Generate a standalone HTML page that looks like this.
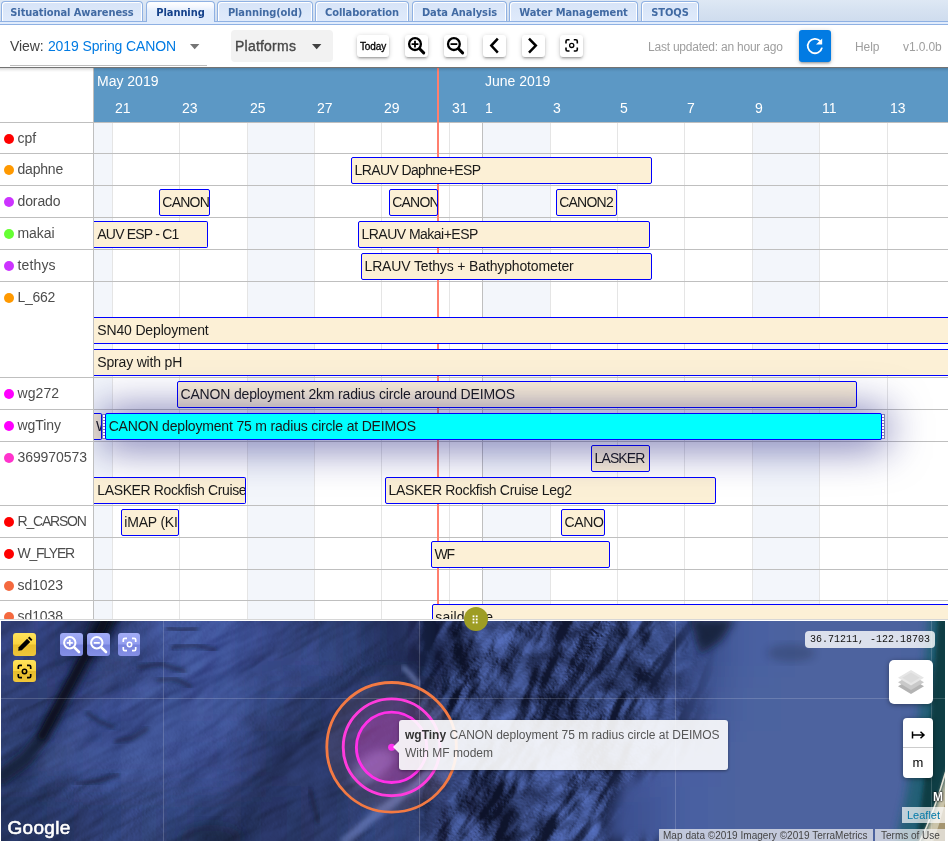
<!DOCTYPE html>
<html lang="en">
<head>
<meta charset="utf-8">
<title>ODSS - Planning</title>
<style>
*{box-sizing:border-box}
html,body{margin:0;padding:0}
body{width:948px;height:841px;overflow:hidden;position:relative;background:#fff;
 font-family:"Liberation Sans",sans-serif;font-size:14px;color:#1a1a1a}
.abs{position:absolute}
/* ---------- ExtJS style tab bar ---------- */
#tabbar{position:absolute;left:0;top:0;width:948px;height:25px;
 background:linear-gradient(#dee8f4 0,#d6e2f1 10px,#cfdcee 21px);}
#tabbar .strip{position:absolute;left:0;top:21px;width:948px;height:4px;background:#e1ecfc;
 border-top:1px solid #8fb1e3;border-bottom:1px solid #8fb1e3}
.tab{position:absolute;top:1px;height:20px;border:1px solid #8fb1e3;border-bottom:none;
 border-radius:4px 4px 0 0;background:linear-gradient(#d7e4f8 0,#dbe7f9 9px,#dfeafb 19px);
 box-shadow:inset 1px 1px 0 #fff,inset -1px 0 0 #fff;
 font:bold 11px "DejaVu Sans Condensed","DejaVu Sans","Liberation Sans",sans-serif;color:#416aa3;
 line-height:20px;padding-top:1px;letter-spacing:-0.08px;text-align:center;white-space:nowrap;overflow:hidden}
.tab.active{height:21px;background:linear-gradient(#ffffff 0,#f3f7fe 5px,#e3eefd 9px,#dfebfc 21px);color:#15428b;z-index:2;box-shadow:none}
/* ---------- toolbar ---------- */
#toolbar{position:absolute;left:0;top:25px;width:948px;height:42px;background:#fff}
#tbshadow{position:absolute;left:0;top:67px;width:948px;height:5px;z-index:20;
 background:linear-gradient(rgba(0,0,0,.55) 0,rgba(0,0,0,.55) 1px,rgba(0,0,0,.16) 1px,rgba(0,0,0,.06) 3px,rgba(0,0,0,0) 5px)}
.tbtxt{position:absolute;white-space:nowrap;line-height:16px}
.btn{position:absolute;top:35px;height:22px;background:#fff;border-radius:3px;
 box-shadow:0 1px 5px rgba(0,0,0,.2),0 2px 2px rgba(0,0,0,.14),0 3px 1px -2px rgba(0,0,0,.12)}
.btn svg{position:absolute;left:0;top:0}
/* ---------- timeline ---------- */
#tl{position:absolute;left:0;top:68px;width:948px;height:551px;overflow:hidden;background:#fff}
#tlhead{position:absolute;left:94px;top:0;width:854px;height:54px;background:#5c98c5;color:#fff}
#tlhead div{position:absolute;white-space:nowrap;line-height:16px;font-size:14px}
#center{position:absolute;left:94px;top:54px;width:854px;height:498px;overflow:hidden}
.vline{position:absolute;top:0;width:1px;height:498px;background:#e5e5e5}
.vline.major{background:#bfbfbf}
.wk{position:absolute;top:0;height:498px;background:#f3f6fb}
.hline{position:absolute;left:0;width:948px;height:1px;background:#bfbfbf}
.lbl{position:absolute;left:0;width:93px;white-space:nowrap;color:#4d4d4d;font-size:14px;line-height:16px}
.dot{position:absolute;left:4px;width:10px;height:10px;border-radius:50%}
.item{position:absolute;height:27px;border:1px solid #0000ff;border-radius:2px;background:#fcf0d6;
 overflow:hidden;white-space:nowrap;font-size:14px;line-height:17px;padding:4px 0 0 3px;color:#1a1a1a}
.item.cut{border-left:none;border-radius:0 2px 2px 0;padding-left:3px}
.item.sel{background:#00ffff;z-index:5;overflow:visible;box-shadow:0 2px 42px 5px rgba(16,16,120,.6)}
.hd{position:absolute;top:0;width:3px;height:25px;background:repeating-linear-gradient(to bottom,#7d7db3 0,#7d7db3 1px,#fff 1px,#fff 3px)}
#now{position:absolute;left:437px;top:0;width:2px;height:552px;background:#ff7f6e;z-index:2}
</style>
</head>
<body>

<div id="tabbar"><div class="strip"></div>
<div class="tab" style="left:1px;width:142px">Situational Awareness</div>
<div class="tab active" style="left:146px;width:69px">Planning</div>
<div class="tab" style="left:217px;width:96px">Planning(old)</div>
<div class="tab" style="left:315px;width:94px">Collaboration</div>
<div class="tab" style="left:412px;width:95px">Data Analysis</div>
<div class="tab" style="left:509px;width:129px">Water Management</div>
<div class="tab" style="left:641px;width:58px">STOQS</div>
</div>
<div id="toolbar"></div>
<div class="tbtxt" style="left:10px;top:38px;font-size:14px;color:#424242;letter-spacing:-0.1px">View: <span style="color:#027be3;margin-left:0.6px">2019 Spring CANON</span></div>
<div class="abs" style="left:10px;top:65px;width:197px;height:1px;background:#bdbdbd"></div>
<svg class="abs" style="left:188px;top:43px" width="12" height="7" viewBox="0 0 12 7"><path d="M2 1h9.4l-4.7 5.2z" fill="#757575"/></svg>
<div class="abs" style="left:231px;top:30px;width:102px;height:32px;background:#f2f2f2;border-radius:4px"></div>
<div class="tbtxt" style="left:235px;top:38px;font-size:14px;color:#484848;-webkit-text-stroke:0.35px #484848;letter-spacing:0.22px">Platforms</div>
<svg class="abs" style="left:310px;top:43px" width="12" height="7" viewBox="0 0 12 7"><path d="M2 1h9.4l-4.7 5.2z" fill="#424242"/></svg>
<div class="btn" style="left:357px;width:32px"><div style="position:absolute;left:0;top:0;width:32px;line-height:22px;padding-top:1px;text-align:center;font-size:10px;color:#000;-webkit-text-stroke:0.3px #000;letter-spacing:-0.1px">Today</div></div>
<div class="btn" style="left:405px;width:23px"><svg width="23" height="22" viewBox="0 0 23 22"><circle cx="10" cy="9.1" r="5.9" fill="none" stroke="#000" stroke-width="2.3"/><path d="M14.6 13.8l4.1 4.1" stroke="#000" stroke-width="3" stroke-linecap="round"/><path d="M6.6 9.1h6.8M10 5.7v6.8" stroke="#000" stroke-width="1.8"/></svg></div>
<div class="btn" style="left:444px;width:23px"><svg width="23" height="22" viewBox="0 0 23 22"><circle cx="9.9" cy="9.1" r="5.9" fill="none" stroke="#000" stroke-width="2.3"/><path d="M14.5 13.8l4.1 4.1" stroke="#000" stroke-width="3" stroke-linecap="round"/><path d="M6.5 9.1h6.8" stroke="#000" stroke-width="1.8"/></svg></div>
<div class="btn" style="left:483px;width:23px"><svg width="23" height="22" viewBox="0 0 23 22"><path d="M14.800 3.600L8.300 10.600L14.800 17.600" fill="none" stroke="#000" stroke-width="2.500"/></svg></div>
<div class="btn" style="left:522px;width:23px"><svg width="23" height="22" viewBox="0 0 23 22"><path d="M7 3.600L13.800 10.600L7 17.600" fill="none" stroke="#000" stroke-width="2.500"/></svg></div>
<div class="btn" style="left:560px;width:23px"><svg width="23" height="22" viewBox="0 0 23 22"><path d="M6 8.4V6.3a1.5 1.5 0 0 1 1.5-1.5h2M13.8 4.8h2a1.5 1.5 0 0 1 1.5 1.5v2.1M17.3 12.4v2.1a1.5 1.5 0 0 1-1.5 1.5h-2M9.5 16h-2A1.5 1.5 0 0 1 6 14.500v-2.1" fill="none" stroke="#000" stroke-width="1.600"/><circle cx="11.700" cy="10.400" r="2.100" fill="none" stroke="#000" stroke-width="1.300"/></svg></div>
<div class="tbtxt" style="left:648px;top:39px;font-size:12px;color:#9e9e9e;letter-spacing:-0.22px">Last updated: an hour ago</div>
<div class="abs" style="left:799px;top:30px;width:32px;height:32px;background:#027be3;border-radius:3px;box-shadow:0 1px 5px rgba(0,0,0,.2),0 2px 2px rgba(0,0,0,.14),0 3px 1px -2px rgba(0,0,0,.12)"><svg width="32" height="32" viewBox="0 0 32 32"><path d="M21.3 11.2A7.2 7.2 0 1 0 23 17.6" fill="none" stroke="#fff" stroke-width="1.8"/><path d="M23.2 8.4v6.2H17z" fill="#fff"/></svg></div>
<div class="tbtxt" style="left:855px;top:39px;font-size:12px;color:#9e9e9e;letter-spacing:-0.1px">Help</div>
<div class="tbtxt" style="left:903px;top:39px;font-size:12px;color:#9e9e9e;letter-spacing:-0.1px">v1.0.0b</div>
<div id="tl">
<div class="abs" style="left:93px;top:0;width:1px;height:552px;background:#bfbfbf"></div>
<div id="tlhead">
<div style="left:3px;top:5px">May 2019</div>
<div style="left:391.0px;top:5px">June 2019</div>
<div style="left:21.0px;top:32px">21</div>
<div style="left:88.0px;top:32px">23</div>
<div style="left:156.0px;top:32px">25</div>
<div style="left:223.0px;top:32px">27</div>
<div style="left:290.0px;top:32px">29</div>
<div style="left:358.0px;top:32px">31</div>
<div style="left:391.0px;top:32px">1</div>
<div style="left:459.0px;top:32px">3</div>
<div style="left:526.0px;top:32px">5</div>
<div style="left:593.0px;top:32px">7</div>
<div style="left:661.0px;top:32px">9</div>
<div style="left:728.0px;top:32px">11</div>
<div style="left:796.0px;top:32px">13</div>
</div>
<div id="center">
<div class="wk" style="left:0px;width:18px"></div>
<div class="wk" style="left:153px;width:67px"></div>
<div class="wk" style="left:388px;width:68px"></div>
<div class="wk" style="left:658px;width:67px"></div>
<div class="vline" style="left:18px"></div>
<div class="vline" style="left:85px"></div>
<div class="vline" style="left:153px"></div>
<div class="vline" style="left:220px"></div>
<div class="vline" style="left:287px"></div>
<div class="vline" style="left:355px"></div>
<div class="vline major" style="left:388px"></div>
<div class="vline" style="left:456px"></div>
<div class="vline" style="left:523px"></div>
<div class="vline" style="left:590px"></div>
<div class="vline" style="left:658px"></div>
<div class="vline" style="left:725px"></div>
<div class="vline" style="left:793px"></div>
</div>
<div class="hline" style="top:54px"></div>
<div class="hline" style="top:85px"></div>
<div class="hline" style="top:117px"></div>
<div class="hline" style="top:149px"></div>
<div class="hline" style="top:181px"></div>
<div class="hline" style="top:213px"></div>
<div class="hline" style="top:309px"></div>
<div class="hline" style="top:341px"></div>
<div class="hline" style="top:373px"></div>
<div class="hline" style="top:437px"></div>
<div class="hline" style="top:469px"></div>
<div class="hline" style="top:501px"></div>
<div class="hline" style="top:532px"></div>
<div class="dot" style="top:66px;background:#ff0000"></div>
<div class="lbl" style="left:17.5px;top:62px;letter-spacing:-0.08px">cpf</div>
<div class="dot" style="top:97px;background:#ff9900"></div>
<div class="lbl" style="left:17.5px;top:93px;letter-spacing:-0.2px">daphne</div>
<div class="dot" style="top:129px;background:#cc33ff"></div>
<div class="lbl" style="left:17.5px;top:125px;letter-spacing:-0.1px">dorado</div>
<div class="dot" style="top:161px;background:#66ff33"></div>
<div class="lbl" style="left:17.5px;top:157px;letter-spacing:-0.08px">makai</div>
<div class="dot" style="top:193px;background:#cc33ff"></div>
<div class="lbl" style="left:17.5px;top:189px;letter-spacing:0.15px">tethys</div>
<div class="dot" style="top:225px;background:#ff9900"></div>
<div class="lbl" style="left:17.5px;top:221px;letter-spacing:-0.3px">L_662</div>
<div class="dot" style="top:321px;background:#ff00ff"></div>
<div class="lbl" style="left:17.5px;top:317px;letter-spacing:0.1px">wg272</div>
<div class="dot" style="top:353px;background:#ff00ff"></div>
<div class="lbl" style="left:17.5px;top:349px;letter-spacing:-0.08px">wgTiny</div>
<div class="dot" style="top:385px;background:#ff33cc"></div>
<div class="lbl" style="left:17.5px;top:381px;letter-spacing:-0.08px">369970573</div>
<div class="dot" style="top:449px;background:#ff0000"></div>
<div class="lbl" style="left:17.5px;top:445px;letter-spacing:-1.2px">R_CARSON</div>
<div class="dot" style="top:481px;background:#ff0000"></div>
<div class="lbl" style="left:17.5px;top:477px;letter-spacing:-1.25px">W_FLYER</div>
<div class="dot" style="top:513px;background:#f4693f"></div>
<div class="lbl" style="left:17.5px;top:509px;letter-spacing:-0.08px">sd1023</div>
<div class="dot" style="top:544px;background:#f4693f"></div>
<div class="lbl" style="left:17.5px;top:540px;letter-spacing:-0.08px">sd1038</div>
<div class="abs" style="left:94px;top:0;width:854px;height:552px;overflow:hidden;z-index:3">
<div class="item " style="left:257px;top:89px;width:301px;padding-left:2.60px;letter-spacing:-0.627px">LRAUV Daphne+ESP</div>
<div class="item " style="left:65px;top:121px;width:51px;padding-left:2.30px;letter-spacing:-0.77px">CANON</div>
<div class="item " style="left:295px;top:121px;width:49px;padding-left:2.20px;letter-spacing:-0.77px">CANON</div>
<div class="item " style="left:462px;top:121px;width:61px;padding-left:2.20px;letter-spacing:-0.768px">CANON2</div>
<div class="item cut" style="left:0px;top:153px;width:114px;padding-left:3.30px;letter-spacing:-0.797px">AUV ESP - C1</div>
<div class="item " style="left:264px;top:153px;width:292px;padding-left:2.50px;letter-spacing:-0.522px">LRAUV Makai+ESP</div>
<div class="item " style="left:267px;top:185px;width:291px;padding-left:2.50px;letter-spacing:-0.143px">LRAUV Tethys + Bathyphotometer</div>
<div class="item cut" style="left:0px;top:249px;width:866px;padding-left:3.30px;letter-spacing:-0.158px">SN40 Deployment</div>
<div class="item cut" style="left:0px;top:281px;width:866px;padding-left:3.30px;letter-spacing:-0.178px">Spray with pH</div>
<div class="item " style="left:83px;top:313px;width:680px;padding-left:2.50px;letter-spacing:-0.167px">CANON deployment 2km radius circle around DEIMOS</div>
<div class="item cut" style="left:0px;top:345px;width:8px;padding-left:2.00px;letter-spacing:0px">W</div>
<div class="item " style="left:497px;top:377px;width:59px;padding-left:2.60px;letter-spacing:-0.91px">LASKER</div>
<div class="item cut" style="left:0px;top:409px;width:152px;padding-left:3.30px;letter-spacing:-0.373px">LASKER Rockfish Cruise Leg1</div>
<div class="item " style="left:291px;top:409px;width:331px;padding-left:2.50px;letter-spacing:-0.335px">LASKER Rockfish Cruise Leg2</div>
<div class="item " style="left:27px;top:441px;width:58px;padding-left:2.30px;letter-spacing:-0.2px">iMAP (KISS)</div>
<div class="item " style="left:467px;top:441px;width:44px;padding-left:2.60px;letter-spacing:-0.35px">CANON</div>
<div class="item " style="left:337px;top:473px;width:179px;padding-left:2.50px;letter-spacing:-1.3px">WF</div>
<div class="item " style="left:338px;top:536px;width:528px;padding-left:2.30px;letter-spacing:0.111px">saildrone</div>
<div class="item sel" style="left:11px;top:345px;width:777px;padding-left:2.70px;letter-spacing:-0.177px">CANON deployment 75 m radius circle at DEIMOS<i class="hd" style="left:-4px;border-left:1px solid #7d7db3"></i><i class="hd" style="right:-4px;border-right:1px solid #7d7db3"></i></div>
</div>
<div id="now"></div>
</div>
<div id="tbshadow"></div>
<div id="map" class="abs" style="left:1px;top:621px;width:944px;height:220px;background:#3a4e8d;overflow:hidden;font-family:'Liberation Sans',sans-serif">
<svg width="944" height="221" viewBox="0 0 944 221" style="position:absolute;left:0;top:0;display:block">
<defs>
<filter id="rug" x="0" y="0" width="100%" height="100%" color-interpolation-filters="sRGB">
 <feTurbulence type="fractalNoise" baseFrequency="0.0065 0.017" numOctaves="4" seed="23" result="n"/>
 <feColorMatrix in="n" type="matrix" values="0 0 0 0 0  0 0 0 0 0  0 0 0 0 0  1.6 0 0 0 -0.3" result="h"/>
 <feDiffuseLighting in="h" surfaceScale="24" diffuseConstant="1" lighting-color="#6480d6" result="lit">
  <feDistantLight azimuth="200" elevation="32"/>
 </feDiffuseLighting>
 <feComponentTransfer><feFuncR type="linear" slope="0.92" intercept="0.035"/><feFuncG type="linear" slope="0.92" intercept="0.05"/><feFuncB type="linear" slope="0.88" intercept="0.12"/></feComponentTransfer>
</filter>
<filter id="soft" x="0" y="0" width="100%" height="100%" color-interpolation-filters="sRGB">
 <feTurbulence type="fractalNoise" baseFrequency="0.006 0.02" numOctaves="4" seed="5" result="n"/>
 <feColorMatrix in="n" type="matrix" values="0 0 0 0 0  0 0 0 0 0  0 0 0 0 0  1.5 0 0 0 -0.25" result="h"/>
 <feDiffuseLighting in="h" surfaceScale="5" diffuseConstant="1" lighting-color="#ffffff" result="lit">
  <feDistantLight azimuth="200" elevation="30"/>
 </feDiffuseLighting>
</filter>
<filter id="b2" x="-20%" y="-20%" width="140%" height="140%"><feGaussianBlur stdDeviation="2"/></filter>
<filter id="b4" x="-20%" y="-20%" width="140%" height="140%"><feGaussianBlur stdDeviation="4"/></filter>
<filter id="b8" x="-30%" y="-30%" width="160%" height="160%"><feGaussianBlur stdDeviation="8"/></filter>
<filter id="bg" x="0" y="0" width="100%" height="100%" filterUnits="userSpaceOnUse"><feGaussianBlur stdDeviation="20 16"/></filter>
<linearGradient id="mrug" x1="0" y1="0" x2="1" y2="0">
 <stop offset="0" stop-color="#fff" stop-opacity="0"/><stop offset="0.42" stop-color="#fff" stop-opacity="0"/>
 <stop offset="0.48" stop-color="#fff" stop-opacity="1"/><stop offset="0.68" stop-color="#fff" stop-opacity="1"/>
 <stop offset="0.76" stop-color="#fff" stop-opacity="0"/><stop offset="1" stop-color="#fff" stop-opacity="0"/>
</linearGradient>
<mask id="mk1" maskUnits="userSpaceOnUse" x="0" y="0" width="944" height="221">
 <rect width="944" height="221" fill="url(#mrug)"/>
 <path d="M600 221L620 160L700 130L760 130L760 221Z" fill="#000" filter="url(#b8)"/>
</mask>
<linearGradient id="msoft" x1="0" y1="0" x2="1" y2="0">
 <stop offset="0" stop-color="#fff" stop-opacity="1"/><stop offset="0.38" stop-color="#fff" stop-opacity="1"/>
 <stop offset="0.46" stop-color="#fff" stop-opacity="0"/><stop offset="1" stop-color="#fff" stop-opacity="0"/>
</linearGradient>
<mask id="mk2" maskUnits="userSpaceOnUse" x="0" y="0" width="944" height="221"><rect width="944" height="221" fill="url(#msoft)"/></mask>
</defs>
<g filter="url(#bg)">
<rect x="-200.0" y="-200.0" width="260.6" height="255.8" fill="#30417a"/>
<rect x="60.0" y="-200.0" width="60.6" height="255.8" fill="#232e5a"/>
<rect x="120.0" y="-200.0" width="60.6" height="255.8" fill="#3a4d8e"/>
<rect x="180.0" y="-200.0" width="60.6" height="255.8" fill="#4358a0"/>
<rect x="240.0" y="-200.0" width="60.6" height="255.8" fill="#374a8a"/>
<rect x="300.0" y="-200.0" width="60.6" height="255.8" fill="#2f3f75"/>
<rect x="360.0" y="-200.0" width="60.6" height="255.8" fill="#232e5a"/>
<rect x="420.0" y="-200.0" width="60.6" height="255.8" fill="#1e2850"/>
<rect x="480.0" y="-200.0" width="60.6" height="255.8" fill="#2a3868"/>
<rect x="540.0" y="-200.0" width="60.6" height="255.8" fill="#34457f"/>
<rect x="600.0" y="-200.0" width="60.6" height="255.8" fill="#33447c"/>
<rect x="660.0" y="-200.0" width="60.6" height="255.8" fill="#364885"/>
<rect x="720.0" y="-200.0" width="60.6" height="255.8" fill="#4a60a2"/>
<rect x="780.0" y="-200.0" width="60.6" height="255.8" fill="#4e649f"/>
<rect x="840.0" y="-200.0" width="60.6" height="255.8" fill="#4e649f"/>
<rect x="900.0" y="-200.0" width="260.6" height="255.8" fill="#4c639e"/>
<rect x="-200.0" y="55.2" width="260.6" height="55.9" fill="#2d3c70"/>
<rect x="60.0" y="55.2" width="60.6" height="55.9" fill="#35478a"/>
<rect x="120.0" y="55.2" width="60.6" height="55.9" fill="#3d5192"/>
<rect x="180.0" y="55.2" width="60.6" height="55.9" fill="#3f5499"/>
<rect x="240.0" y="55.2" width="60.6" height="55.9" fill="#2f3f74"/>
<rect x="300.0" y="55.2" width="60.6" height="55.9" fill="#2a386a"/>
<rect x="360.0" y="55.2" width="60.6" height="55.9" fill="#2c3a6c"/>
<rect x="420.0" y="55.2" width="60.6" height="55.9" fill="#1d2750"/>
<rect x="480.0" y="55.2" width="60.6" height="55.9" fill="#2a3766"/>
<rect x="540.0" y="55.2" width="60.6" height="55.9" fill="#27335f"/>
<rect x="600.0" y="55.2" width="60.6" height="55.9" fill="#2c3a6c"/>
<rect x="660.0" y="55.2" width="60.6" height="55.9" fill="#3d5192"/>
<rect x="720.0" y="55.2" width="60.6" height="55.9" fill="#4c63a0"/>
<rect x="780.0" y="55.2" width="60.6" height="55.9" fill="#4e649f"/>
<rect x="840.0" y="55.2" width="60.6" height="55.9" fill="#4e649f"/>
<rect x="900.0" y="55.2" width="260.6" height="55.9" fill="#4c639e"/>
<rect x="-200.0" y="110.5" width="260.6" height="55.9" fill="#2f3f74"/>
<rect x="60.0" y="110.5" width="60.6" height="55.9" fill="#3b4f90"/>
<rect x="120.0" y="110.5" width="60.6" height="55.9" fill="#3d5193"/>
<rect x="180.0" y="110.5" width="60.6" height="55.9" fill="#3a4e90"/>
<rect x="240.0" y="110.5" width="60.6" height="55.9" fill="#2a386b"/>
<rect x="300.0" y="110.5" width="60.6" height="55.9" fill="#2a3869"/>
<rect x="360.0" y="110.5" width="60.6" height="55.9" fill="#2c3a6c"/>
<rect x="420.0" y="110.5" width="60.6" height="55.9" fill="#1b2448"/>
<rect x="480.0" y="110.5" width="60.6" height="55.9" fill="#1f2a52"/>
<rect x="540.0" y="110.5" width="60.6" height="55.9" fill="#3a4d8c"/>
<rect x="600.0" y="110.5" width="60.6" height="55.9" fill="#44589c"/>
<rect x="660.0" y="110.5" width="60.6" height="55.9" fill="#4a5fa2"/>
<rect x="720.0" y="110.5" width="60.6" height="55.9" fill="#4e649f"/>
<rect x="780.0" y="110.5" width="60.6" height="55.9" fill="#4e649f"/>
<rect x="840.0" y="110.5" width="60.6" height="55.9" fill="#4e649f"/>
<rect x="900.0" y="110.5" width="260.6" height="55.9" fill="#4c639e"/>
<rect x="-200.0" y="165.8" width="260.6" height="255.8" fill="#273462"/>
<rect x="60.0" y="165.8" width="60.6" height="255.8" fill="#2d3d72"/>
<rect x="120.0" y="165.8" width="60.6" height="255.8" fill="#32447c"/>
<rect x="180.0" y="165.8" width="60.6" height="255.8" fill="#2c3a6c"/>
<rect x="240.0" y="165.8" width="60.6" height="255.8" fill="#27335f"/>
<rect x="300.0" y="165.8" width="60.6" height="255.8" fill="#2b3868"/>
<rect x="360.0" y="165.8" width="60.6" height="255.8" fill="#33447c"/>
<rect x="420.0" y="165.8" width="60.6" height="255.8" fill="#1a2345"/>
<rect x="480.0" y="165.8" width="60.6" height="255.8" fill="#27335f"/>
<rect x="540.0" y="165.8" width="60.6" height="255.8" fill="#33447c"/>
<rect x="600.0" y="165.8" width="60.6" height="255.8" fill="#3d5192"/>
<rect x="660.0" y="165.8" width="60.6" height="255.8" fill="#4a60a2"/>
<rect x="720.0" y="165.8" width="60.6" height="255.8" fill="#4e649f"/>
<rect x="780.0" y="165.8" width="60.6" height="255.8" fill="#4e649f"/>
<rect x="840.0" y="165.8" width="60.6" height="255.8" fill="#4e649f"/>
<rect x="900.0" y="165.8" width="260.6" height="255.8" fill="#4c639e"/>
</g>
<g mask="url(#mk2)" style="mix-blend-mode:overlay" opacity="0.55"><g transform="rotate(-25 200 110)"><rect x="-250" y="-350" width="900" height="900" filter="url(#soft)"/></g></g>
<g mask="url(#mk1)" opacity="0.78"><g transform="rotate(-52 560 110)"><rect x="100" y="-350" width="900" height="900" filter="url(#rug)"/></g></g>
<path d="M111 -4L99 15L87 31L73 59L57 87L43 114L25 137L1 155" fill="none" stroke="#0c1228" stroke-width="15" stroke-linecap="round" stroke-linejoin="round" opacity="0.75" filter="url(#b4)"/>
<path d="M91 -4L115 -4L103 19L91 35L79 29" fill="#0c1228" opacity="0.8" filter="url(#b4)"/>
<path d="M105 -4L95 19L83 37L69 63L55 89L41 115" fill="none" stroke="#070b1c" stroke-width="8" stroke-linecap="round" stroke-linejoin="round" opacity="0.85" filter="url(#b2)"/>
<path d="M127 19L104 54L84 94L69 124L44 149" fill="none" stroke="#6d83c8" stroke-width="12" stroke-linecap="round" opacity="0.25" filter="url(#b8)"/>
<path d="M138 46L159 43L183 50" fill="none" stroke="#0c1228" stroke-width="4.5" stroke-linecap="round" opacity="0.5" filter="url(#b2)"/>
<path d="M157 59L174 58L189 65" fill="none" stroke="#0c1228" stroke-width="4.5" stroke-linecap="round" opacity="0.5" filter="url(#b2)"/>
<path d="M172 26L194 24L214 29" fill="none" stroke="#0c1228" stroke-width="4.5" stroke-linecap="round" opacity="0.5" filter="url(#b2)"/>
<path d="M86 92L99 101L112 106" fill="none" stroke="#0c1228" stroke-width="4.5" stroke-linecap="round" opacity="0.5" filter="url(#b2)"/>
<path d="M115 120L131 117L146 108" fill="none" stroke="#0c1228" stroke-width="4.5" stroke-linecap="round" opacity="0.5" filter="url(#b2)"/>
<path d="M75 162L97 160L117 154" fill="none" stroke="#0c1228" stroke-width="4.5" stroke-linecap="round" opacity="0.5" filter="url(#b2)"/>
<path d="M167 7L179 9L195 8" fill="none" stroke="#0c1228" stroke-width="4.5" stroke-linecap="round" opacity="0.5" filter="url(#b2)"/>
<path d="M309 169L313 184L317 201" fill="none" stroke="#0c1228" stroke-width="4.5" stroke-linecap="round" opacity="0.5" filter="url(#b2)"/>
<ellipse cx="210" cy="218" rx="32" ry="14" fill="#0c1228" opacity="0.5" filter="url(#b8)"/>
<ellipse cx="372" cy="146" rx="24" ry="13" fill="#8c9ad8" opacity="0.45" filter="url(#b4)" transform="rotate(-35 372 146)"/>
<path d="M344 220L374 194L409 169L429 151" fill="none" stroke="#7f92d6" stroke-width="9" stroke-linecap="round" opacity="0.5" filter="url(#b2)"/>
<path d="M403 47L411 55L417 63" fill="none" stroke="#8fa0dc" stroke-width="5" stroke-linecap="round" opacity="0.55" filter="url(#b2)"/>
<path d="M689 -2L734 -2L721 19L699 34" fill="#0c1228" opacity="0.75" filter="url(#b4)"/>
<ellipse cx="790" cy="32" rx="24" ry="9" fill="#0c1228" opacity="0.22" filter="url(#b4)"/>
<path d="M928 -10L950 -10L950 230L892 230Q915 150 928 -10Z" fill="#1f5f70" opacity="0.85" filter="url(#b4)"/>
<path d="M937 -5L950 -5L950 226L914 226Q930 120 937 -5Z" fill="#0b3a41" opacity="0.92" filter="url(#b2)"/>
<path d="M947 146L947 224L918 224Q936 190 947 146Z" fill="#d6ccb0" filter="url(#b2)" opacity="0.95"/>
<path d="M947 170L947 224L931 224Q940 200 947 170Z" fill="#9b8a62" opacity="0.8"/>
<path d="M946 146Q934 190 918 222" fill="none" stroke="#f4f0e2" stroke-width="1.6" opacity="0.9"/>
<rect x="162" y="0" width="1" height="221" fill="#fff" opacity="0.17"/>
<rect x="418" y="0" width="1" height="221" fill="#fff" opacity="0.17"/>
<rect x="674" y="0" width="1" height="221" fill="#fff" opacity="0.17"/>
<rect x="930" y="0" width="1" height="221" fill="#fff" opacity="0.17"/>
<rect x="0" y="77" width="944" height="1" fill="#fff" opacity="0.17"/>
</svg>
<svg class="abs" style="left:0;top:0" width="944" height="220" viewBox="0 0 944 220">
<circle cx="390.6" cy="126.3" r="64.8" fill="#ff8a50" fill-opacity="0.08" stroke="#f37a43" stroke-width="2.8"/>
<circle cx="390.6" cy="126.3" r="48.4" fill="#ff40e0" fill-opacity="0.1" stroke="#ff3bdc" stroke-width="2.9"/>
<circle cx="390.6" cy="126.3" r="35.2" fill="#ff40e0" fill-opacity="0.22" stroke="#ff30e8" stroke-width="2.9"/>
<circle cx="390.6" cy="126.3" r="3.5" fill="#ff30f0"/>
</svg>
<div class="abs" style="left:398px;top:99px;width:329px;height:50px;background:rgba(255,255,255,.9);border-radius:3px;box-shadow:0 1px 3px rgba(0,0,0,.4);font-size:12px;line-height:18px;color:#555;padding:6px 0 0 6px;white-space:nowrap"><b style="color:#333">wgTiny</b> CANON deployment 75 m radius circle at DEIMOS<br>With MF modem</div>
<div class="abs" style="left:392px;top:120px;width:0;height:0;border:6px solid transparent;border-left:none;border-right:6px solid rgba(255,255,255,.9)"></div>
<div class="abs" style="left:12px;top:12px;width:23px;height:23px;overflow:hidden;background:linear-gradient(#ffe35c 0,#fbd43f 48%,#e8bd2c 52%,#efc63a 100%);border-radius:3px;"><svg width="23" height="23" viewBox="0 0 23 23"><path d="M5.2 17.8l.5-3.6 8.4-8.4 3.1 3.1-8.4 8.4z" fill="#000"/><path d="M15 4.9l1.3-1.3 3.1 3.1-1.3 1.3z" fill="#000"/></svg></div>
<div class="abs" style="left:12px;top:39px;width:23px;height:22px;overflow:hidden;background:linear-gradient(#ffe35c 0,#fbd43f 48%,#e8bd2c 52%,#efc63a 100%);border-radius:3px;"><svg width="23" height="23" viewBox="0 0 23 23"><path d="M5.3 9V6.8a1.5 1.5 0 0 1 1.5-1.5H9M14 5.300h2.200a1.5 1.5 0 0 1 1.5 1.5V9M17.7 14v2.200a1.5 1.5 0 0 1-1.500 1.500H14M9 17.700H6.800a1.500 1.500 0 0 1-1.500-1.500V14" fill="none" stroke="#000" stroke-width="1.7"/><circle cx="11.5" cy="11.500" r="2.200" fill="none" stroke="#000" stroke-width="1.500"/></svg></div>
<div class="abs" style="left:59px;top:12px;width:23px;height:23px;overflow:hidden;background:linear-gradient(#a3adf6 0,#919cef 48%,#7783dd 52%,#8590e6 100%);border-radius:3px;"><svg width="23" height="23" viewBox="0 0 23 23"><circle cx="9.800" cy="9.800" r="5.700" fill="none" stroke="#fff" stroke-width="2"/><path d="M14.300 14.300l4.700 4.700" stroke="#fff" stroke-width="2.600" stroke-linecap="round"/><path d="M6.800 9.800h6M9.800 6.800v6" stroke="#fff" stroke-width="1.700"/></svg></div>
<div class="abs" style="left:86px;top:12px;width:23px;height:23px;overflow:hidden;background:linear-gradient(#a3adf6 0,#919cef 48%,#7783dd 52%,#8590e6 100%);border-radius:3px;"><svg width="23" height="23" viewBox="0 0 23 23"><circle cx="9.800" cy="9.800" r="5.700" fill="none" stroke="#fff" stroke-width="2"/><path d="M14.300 14.300l4.700 4.700" stroke="#fff" stroke-width="2.600" stroke-linecap="round"/><path d="M6.800 9.800h6" stroke="#fff" stroke-width="1.700"/></svg></div>
<div class="abs" style="left:117px;top:12px;width:22px;height:23px;overflow:hidden;background:linear-gradient(#a3adf6 0,#919cef 48%,#7783dd 52%,#8590e6 100%);border-radius:3px;"><svg width="23" height="23" viewBox="0 0 23 23"><path d="M5.3 9V6.8a1.5 1.5 0 0 1 1.5-1.5H9M14 5.300h2.200a1.5 1.5 0 0 1 1.5 1.5V9M17.7 14v2.200a1.5 1.5 0 0 1-1.500 1.500H14M9 17.700H6.800a1.500 1.500 0 0 1-1.500-1.500V14" fill="none" stroke="#fff" stroke-width="1.7"/><circle cx="11.5" cy="11.500" r="2.200" fill="none" stroke="#fff" stroke-width="1.500"/></svg></div>
<div class="abs" style="left:804px;top:10px;width:130px;height:17px;background:rgba(255,255,255,.8);border-radius:4px;font:10px/18px 'Liberation Mono',monospace;color:#111;text-align:center;white-space:nowrap">36.71211, -122.18703</div>
<div class="abs" style="left:888px;top:39px;width:44px;height:44px;background:#fff;border-radius:5px;box-shadow:0 1px 5px rgba(0,0,0,.4)"><svg width="44" height="44" viewBox="0 0 44 44"><path d="M22 18.500l-13 7.800 13 7.800 13-7.800z" fill="#b3b3b3"/><path d="M22 14.500l-13 7.800 13 7.800 13-7.800z" fill="#c9c9c9"/><path d="M22 10l-13 7.800 13 7.800 13-7.800z" fill="#e6e6e6"/><path d="M22 12.500l-8.800 5.300 8.800 5.300 8.800-5.300z" fill="#dcdcdc"/></svg></div>
<div class="abs" style="left:902px;top:97px;width:30px;height:60px;background:#fff;border-radius:4px;box-shadow:0 1px 5px rgba(0,0,0,.4)"><div style="position:absolute;left:0;top:29px;width:30px;height:1px;background:#ccc"></div><svg class="abs" style="left:0;top:0" width="30" height="30" viewBox="0 0 30 30"><path d="M9.500 13.500v7M9.500 17h11M17.500 13.800l3.500 3.200-3.500 3.200" fill="none" stroke="#000" stroke-width="1.500"/></svg><div style="position:absolute;left:0;top:31px;width:30px;line-height:28px;text-align:center;font-size:13px;color:#000">m</div></div>
<div class="abs" style="left:901px;top:186px;width:43px;height:16px;background:rgba(255,255,255,.7);font-size:11px;line-height:16px;color:#0078a8;padding-left:5px;white-space:nowrap">Leaflet</div>
<div class="abs" style="left:932px;top:168px;font-size:12px;font-weight:bold;color:#fff;text-shadow:0 0 2px #000,0 0 2px #000;line-height:16px">M</div>
<div class="abs" style="left:658px;top:208px;width:214px;height:12px;background:rgba(245,245,245,.7);font-size:10px;line-height:14px;color:#444;padding-left:4px;white-space:nowrap;letter-spacing:0.04px;overflow:hidden">Map data ©2019 Imagery ©2019 TerraMetrics</div>
<div class="abs" style="left:874px;top:208px;width:70px;height:12px;background:rgba(245,245,245,.7);font-size:10px;line-height:14px;color:#444;padding-left:6px;white-space:nowrap;letter-spacing:0;overflow:hidden">Terms of Use</div>
<div class="abs" style="left:6.5px;top:196px;font-size:19px;line-height:22px;color:#fff;letter-spacing:0.3px;-webkit-text-stroke:0.6px #fff;text-shadow:0 0 1px rgba(0,0,0,.35)">Google</div>
</div>
<div class="abs" style="left:0;top:619px;width:948px;height:1px;background:#d6d6d6"></div>
<div class="abs" style="left:464px;top:607px;width:24px;height:24px;border-radius:50%;background:#9e9d24;z-index:30"><svg width="24" height="24" viewBox="0 0 24 24"><g fill="#fff"><rect x="8.6" y="8.4" width="1.8" height="1.8"/><rect x="11.8" y="8.4" width="1.8" height="1.8"/><rect x="8.6" y="11.5" width="1.8" height="1.8"/><rect x="11.8" y="11.5" width="1.8" height="1.8"/><rect x="8.6" y="14.6" width="1.8" height="1.8"/><rect x="11.8" y="14.6" width="1.8" height="1.8"/></g></svg></div>
</body></html>
